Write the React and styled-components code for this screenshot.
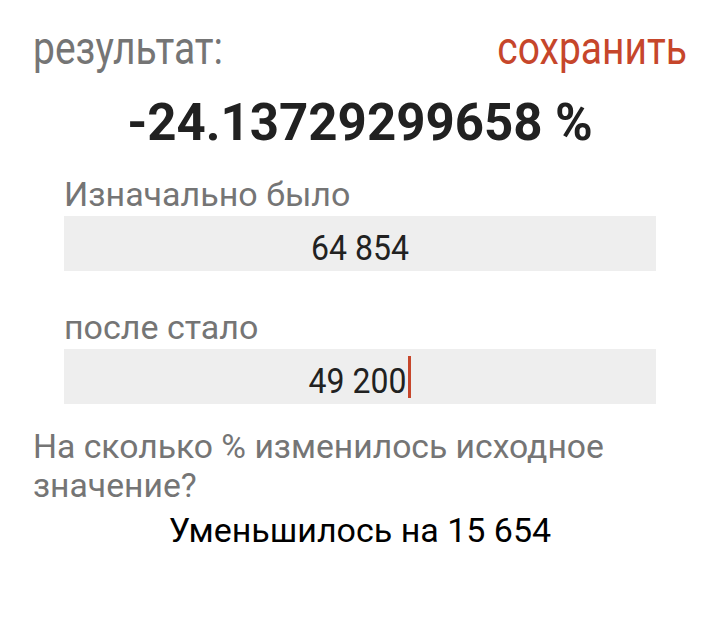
import React from "react";
import styled, { createGlobalStyle } from "styled-components";

const Global = createGlobalStyle`
  html, body { margin: 0; padding: 0; background: #ffffff; }
  body { font-family: Roboto, "Liberation Sans", sans-serif; }
`;

const Page = styled.div`
  width: 720px;
  height: 626px;
  box-sizing: border-box;
  padding: 29px 33px 0 33px;
  display: flex;
  flex-direction: column;
`;

const Header = styled.div`
  display: flex;
  justify-content: space-between;
  align-items: flex-start;
  font-size: 39px;
  line-height: 44px;
  height: 44px;
`;

const Tall = styled.span`
  display: inline-block;
  transform-origin: center 35px;
  transform: scaleY(${(p) => p.$sy || 1.2});
  color: ${(p) => p.$color};
`;

const Result = styled.div`
  margin-top: 20px;
  text-align: center;
  font-weight: 700;
  font-size: 51px;
  line-height: 60px;
  color: #212121;
`;

const Field = styled.div`
  margin: ${(p) => p.$top}px 31px 0 31px;
  display: flex;
  flex-direction: column;
`;

const FieldLabel = styled.div`
  color: #757575;
  font-size: 34px;
  line-height: 43px;
`;

const InputBox = styled.div`
  height: 55px;
  background: #eeeeee;
  display: flex;
  align-items: center;
  justify-content: center;
  font-size: 32px;
  line-height: 40px;
  color: #212121;
`;

const InputValue = styled.span`
  display: inline-block;
  transform: translateY(4px) scaleY(1.12);
`;

const Caret = styled.span`
  display: inline-block;
  width: 3px;
  height: 42px;
  background: #c6462b;
  margin-left: 2px;
`;

const Question = styled.div`
  margin-top: 23px;
  color: #757575;
  font-size: 33.7px;
  line-height: 39px;
`;

const Answer = styled.div`
  margin-top: 5px;
  text-align: center;
  color: #000000;
  font-size: 34px;
  line-height: 40px;
`;

export default function App() {
  return (
    <>
      <Global />
      <Page>
        <Header>
          <Tall $color="#757575">результат:</Tall>
          <Tall $color="#c6462b">сохранить</Tall>
        </Header>
        <Result>-24.13729299658 %</Result>
        <Field $top={20}>
          <FieldLabel>Изначально было</FieldLabel>
          <InputBox>
            <InputValue>64 854</InputValue>
          </InputBox>
        </Field>
        <Field $top={35}>
          <FieldLabel>после стало</FieldLabel>
          <InputBox>
            <InputValue>49 200</InputValue>
            <Caret />
          </InputBox>
        </Field>
        <Question>На сколько % изменилось исходное значение?</Question>
        <Answer>Уменьшилось на 15 654</Answer>
      </Page>
    </>
  );
}
